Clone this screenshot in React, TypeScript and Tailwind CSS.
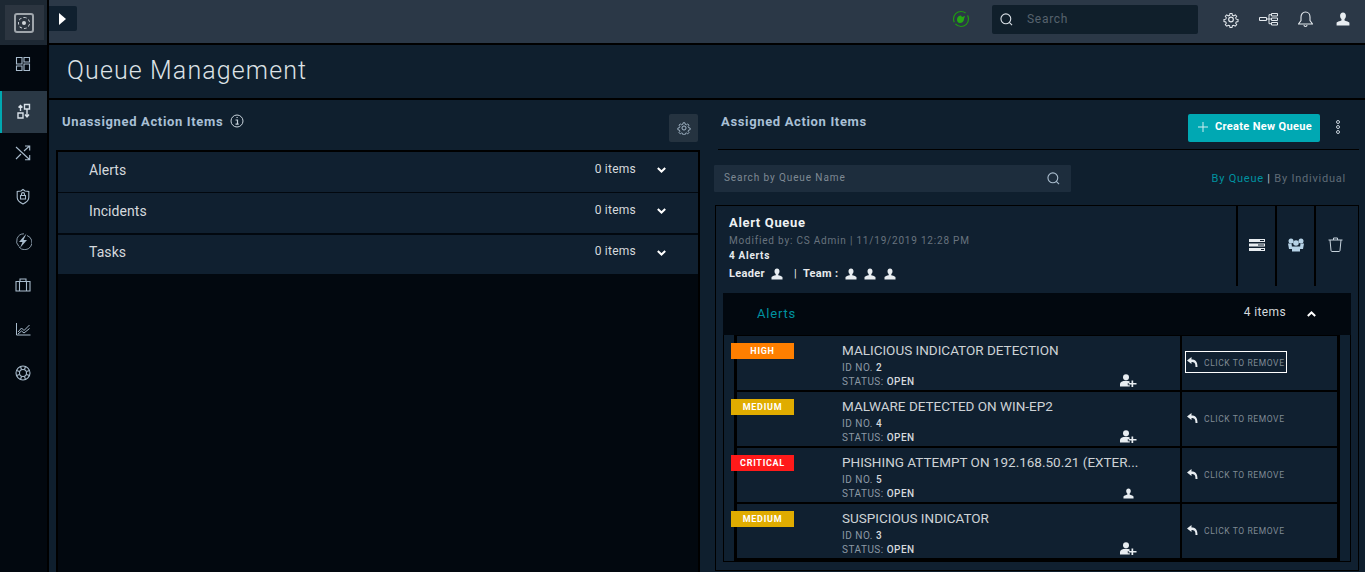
import { ReactNode } from "react";

const font = { fontFamily: "Roboto, 'Noto Sans', sans-serif" };

interface AlertRow {
  severity: string;
  badge: string;
  title: string;
  id: number;
  solo?: boolean;
  focused?: boolean;
}

const rows: AlertRow[] = [
  { severity: "HIGH", badge: "bg-[#ff7f00]", title: "MALICIOUS INDICATOR DETECTION", id: 2, focused: true },
  { severity: "MEDIUM", badge: "bg-[#e0ac00]", title: "MALWARE DETECTED ON WIN-EP2", id: 4 },
  { severity: "CRITICAL", badge: "bg-[#ff1a1a]", title: "PHISHING ATTEMPT ON 192.168.50.21 (EXTER...", id: 5, solo: true },
  { severity: "MEDIUM", badge: "bg-[#e0ac00]", title: "SUSPICIOUS INDICATOR", id: 3 },
];

function Icon({ size = 18, className = "", children }: { size?: number; className?: string; children: ReactNode }) {
  return (
    <svg
      width={size}
      height={size}
      viewBox="0 0 18 18"
      fill="none"
      stroke="currentColor"
      strokeWidth="1.1"
      className={className}
    >
      {children}
    </svg>
  );
}

function Person({ size = 12, className = "text-[#e8edf1]" }: { size?: number; className?: string }) {
  return (
    <svg width={size} height={size} viewBox="0 0 12 12" fill="currentColor" className={className}>
      <path d="M6 0.500c1.600 0 2.500 1.200 2.500 2.800 0 1.200-.5 2.200-1.200 2.800v1c0 .5 3.700 1 4.200 2.200v2.200H.5V9.300c.5-1.200 4.200-1.700 4.200-2.200v-1C4 5.500 3.500 4.500 3.500 3.300 3.500 1.700 4.400.5 6 .5z" />
    </svg>
  );
}

function PersonPlus() {
  return (
    <svg width="17" height="13" viewBox="0 0 17 13" fill="#e8edf1">
      <circle cx="6" cy="3.200" r="3" />
      <path d="M0 12.500V10c0-2 2-3.300 6-3.300 1.500 0 2.700.2 3.600.6v1.700H7.800v2.200h2v1.300z" />
      <path d="M11.500 6.500h1.700v2.400h3.300v1.500h-3.300v2.600h-1.700v-2.600H8.600V8.900h2.900z" />
    </svg>
  );
}

function Gear({ size = 16 }: { size?: number }) {
  return (
    <svg width={size} height={size} viewBox="0 0 24 24" fill="none" stroke="currentColor" strokeWidth="1.700">
      <circle cx="12" cy="12" r="3.500" />
      <path d="M10.300 2h3.400l.6 3 2.200.9 2.600-1.700 2.400 2.400-1.700 2.600.9 2.200 3 .6v3.400l-3 .6-.9 2.200 1.700 2.600-2.400 2.400-2.600-1.700-2.200.9-.6 3h-3.400l-.6-3-2.200-.9-2.600 1.700-2.400-2.400 1.700-2.600-.9-2.200-3-.6v-3.400l3-.6.9-2.200-1.700-2.600 2.400-2.400 2.600 1.700 2.200-.9z" transform="translate(1.200 1.200) scale(.9)" />
    </svg>
  );
}

function Chevron({ up = false }: { up?: boolean }) {
  return (
    <svg width="9" height="6" viewBox="0 0 9 6" fill="none" stroke="#fff" strokeWidth="2" className={up ? "rotate-180" : ""}>
      <path d="M.8 1l3.700 3.500L8.200 1" />
    </svg>
  );
}

function Magnifier({ size = 14, className = "" }: { size?: number; className?: string }) {
  return (
    <svg width={size} height={size} viewBox="0 0 14 14" fill="none" stroke="currentColor" strokeWidth="1.200" className={className}>
      <circle cx="6.300" cy="6.300" r="5.300" />
      <path d="M10 10l3 3" />
    </svg>
  );
}

function Sidebar() {
  return (
    <aside className="w-[49px] shrink-0 bg-[#02080f] border-r-2 border-[#000] flex flex-col text-[#a9bccd]">
      <div className="h-[45px] shrink-0 pl-[5px] pt-[5px] bg-[#1d2833]">
        <div className="w-[39px] h-[35px] bg-[#2c3540] flex items-center justify-center pr-[2px]">
          <div className="w-[20px] h-[20px] rounded-[3px] border-2 border-[#a0a6ac] flex items-center justify-center">
            <div className="w-[12px] h-[12px] rounded-full border border-dashed border-[#d0d5da] flex items-center justify-center">
              <div className="w-[4px] h-[4px] rounded-full bg-[#d0d5da]" />
            </div>
          </div>
        </div>
      </div>
      <div className="h-[38px] mb-[8px] flex items-center justify-center pr-[1px]">
        <Icon>
          <path d="M2.500 2.500h5.500v6.500H2.500zM10 2.500h5.500v4.500H10zM2.500 11h5.500v4.500H2.500zM10 9h5.500v6.500H10z" />
        </Icon>
      </div>
      <div className="h-[42px] flex items-center justify-center bg-[#2a3845] border-l-2 border-[#00a8b0] pr-[2px]">
        <Icon className="text-[#d7e0e8]">
          <path d="M5.500 8V2.500M3.500 4.500l2-2 2 2M9.500 1.500h5v4.500h-5zM12 6v7.500M10 11.500l2 2.500 2-2.500M3 10h5v5H3z" strokeWidth="1.400" />
        </Icon>
      </div>
      <div className="h-[42px] pb-[2px] flex items-center justify-center pr-[1px]">
        <Icon>
          <path d="M2 3l13.500 12.500M2 15l5-5M10 7l5.500-5M11 2h4.700v4.500M15.700 11v4.700H11" />
        </Icon>
      </div>
      <div className="h-[44px] flex items-center justify-center pr-[1px]">
        <Icon>
          <path d="M9 1.500l2 1.500 3.800.5v6c0 3-2.800 5-5.800 6.500-3-1.500-5.800-3.500-5.800-6.500v-6L7 3z" />
          <path d="M6.500 7.500h5v3.500h-5zM7.500 7.500V6c0-1.800 3-1.800 3 0v1.500" />
        </Icon>
      </div>
      <div className="h-[44px] flex items-center justify-center pr-[1px]">
        <Icon>
          <path d="M13 3.500A7.300 7.300 0 1 1 5 15M5 14.500A7.300 7.300 0 0 1 10 1.800" strokeWidth="0.800" />
          <path d="M12.500 1.500L5 10h3.500L6 16l7-8H9.500z" fill="currentColor" stroke="none" />
        </Icon>
      </div>
      <div className="h-[44px] flex items-center justify-center pr-[1px]">
        <Icon>
          <path d="M2 5.500h14v9.500H2zM6 5.500V3h6v2.500M5.500 5.500V15M12.500 5.500V15" />
        </Icon>
      </div>
      <div className="h-[44px] flex items-center justify-center pr-[1px]">
        <Icon>
          <path d="M2.500 3v12h14M4 12l3.500-4 2.500 2.500L15.500 5M4 14l3.500-3 2.500 2 5.500-4.500" strokeWidth="1" />
        </Icon>
      </div>
      <div className="h-[44px] flex items-center justify-center pr-[1px]">
        <Icon>
          <circle cx="9" cy="9" r="7" />
          <circle cx="9" cy="9" r="3.500" />
          <path d="M6.500 2.500l1 3M11.500 2.500l-1 3M15.500 6.500l-3 1M15.500 11.500l-3-1M11.500 15.500l-1-3M6.500 15.500l1-3M2.500 11.500l3-1M2.500 6.500l3 1" />
        </Icon>
      </div>
    </aside>
  );
}

function TopBar() {
  return (
    <header className="h-[45px] shrink-0 bg-[#2b3847] border-b-2 border-[#000] flex items-start text-[#e4e9ee]">
      <button className="w-[28px] h-[25px] mt-[6px] bg-[#10202f] rounded-r-[2px] flex items-center justify-center pr-[2px]">
        <span className="w-0 h-0 border-y-[6px] border-y-transparent border-l-[7px] border-l-white" />
      </button>
      <div className="ml-auto flex items-center h-[42px] pb-[4px]">
        <svg width="18" height="18" viewBox="0 0 18 18" fill="none">
          <circle cx="9" cy="9" r="7.500" stroke="#1f9a12" strokeWidth="1.200" strokeDasharray="18 2 20 3" />
          <path d="M5 9.500c0-2.500 2-4 4-4l1 1.500 3-1-1 3c0 2.500-2 4-4 4S5 11.500 5 9.500z" fill="#25a814" />
        </svg>
        <div className="ml-[22px] w-[206px] h-[29px] rounded-[2px] bg-[#101f2b] flex items-center pl-[8px]">
          <Magnifier size={13} className="text-[#d8dfe5]" />
          <span className="ml-[14px] text-[12px] tracking-[.06em] text-[#56626d]">Search</span>
        </div>
        <div className="ml-[25px] w-[16px] flex justify-center"><Gear size={17} /></div>
        <svg width="19" height="13" viewBox="0 0 19 13" fill="none" stroke="currentColor" className="ml-[20px]">
          <path d="M.5 4.500h7v3h-7zM12.500.5h6v2.500h-6zM12.500 5h6v2.500h-6zM12.500 9.500h6V12h-6zM7.500 6h5M10 1.700v9h2.500M10 1.700h2.500" />
        </svg>
        <svg width="15" height="17" viewBox="0 0 15 17" fill="none" stroke="currentColor" strokeWidth="1.100" className="ml-[20px]">
          <path d="M7.500 1c3 0 4.500 2.500 4.500 5v3.500l2.500 3.500H.5L3 9.500V6c0-2.500 1.500-5 4.500-5zM6 14c0 2 3 2 3 0" />
        </svg>
        <div className="ml-[23px] mr-[15px]"><Person size={14} /></div>
      </div>
    </header>
  );
}

function UnassignedRow({ label, className }: { label: string; className: string }) {
  return (
    <div className={`bg-[#102030] flex items-center pl-[31px] pr-[32px] pb-[4px] text-[#d5d9dd] ${className}`}>
      <span className="text-[14px] tracking-[.005em]">{label}</span>
      <span className="ml-auto -mt-[3px] text-[12px] tracking-[.02em]">0 items</span>
      <span className="ml-[21px] flex"><Chevron /></span>
    </div>
  );
}

function UnassignedPanel() {
  return (
    <section className="w-[651px] shrink-0 flex flex-col pl-[7px]">
      <div className="h-[50px] shrink-0 flex pt-[14px] pr-[2px]">
        <div className="pl-[6px] -mt-[2px] flex items-start">
          <span className="text-[13px] font-bold tracking-[.05em] text-[#a9c0d6]">Unassigned Action Items</span>
          <svg width="14" height="14" viewBox="0 0 14 14" fill="none" stroke="#c8d2db" className="ml-[7px] mt-[2px]">
            <circle cx="7" cy="7" r="6" />
            <path d="M5.500 6h2v4M5.500 10.200h3.200M6.500 3.500h1.200" strokeWidth="1.200" />
          </svg>
        </div>
        <div className="ml-auto w-[29px] h-[28px] rounded-[2px] bg-[#253340] flex items-center justify-center text-[#a9bccd]">
          <Gear size={14} />
        </div>
      </div>
      <div className="flex-1 bg-[#02080f] border-t-2 border-x-2 border-[#000]">
        <UnassignedRow label="Alerts" className="h-[40px] mb-px" />
        <UnassignedRow label="Incidents" className="h-[40px] mb-[2px]" />
        <UnassignedRow label="Tasks" className="h-[39px]" />
      </div>
    </section>
  );
}

function QueueRow({ row }: { row: AlertRow }) {
  return (
    <div className="h-[54px] flex bg-[#102030]">
      <div className="w-[445px] shrink-0 flex border-r-2 border-[#000]">
        <div className={`-ml-[6px] mt-[7px] w-[63px] h-[16px] pt-[1px] shrink-0 flex items-center justify-center text-[9px] font-bold tracking-[.08em] text-white ${row.badge}`}>
          {row.severity}
        </div>
        <div className="ml-[48px] flex-1 min-w-0 pt-[6px] flex flex-col">
          <div className="text-[13.500px] leading-[17px] text-[#cdd2d6] whitespace-nowrap">{row.title}</div>
          <div className="mt-[2px] flex items-end pr-[43px]">
            <div>
              <div className="text-[10px] leading-[14px] tracking-[.05em] text-[#8d99a5]">
                ID NO. <span className="text-[#d5d9dd] font-medium">{row.id}</span>
              </div>
              <div className="text-[10px] leading-[14px] tracking-[.05em] text-[#8d99a5]">
                STATUS: <span className="text-[#d5d9dd] font-medium">OPEN</span>
              </div>
            </div>
            <div className="ml-auto flex mb-[2px]">
              {row.solo ? <span className="mr-[3px]"><Person size={11} /></span> : <PersonPlus />}
            </div>
          </div>
        </div>
      </div>
      <div className="flex-1 pl-[3px] pt-[15px]">
        <div className={`w-[102px] h-[22px] flex items-center pl-[1px] border ${row.focused ? "border-white" : "border-transparent"}`}>
          <svg width="11" height="10" viewBox="0 0 11 10" fill="#e8edf1">
            <path d="M4.500 0L0 3.500 4.500 7V5C7 5 8.500 5.500 8.500 10h2C10.500 4 8 2.500 4.500 2.500z" />
          </svg>
          <span className="ml-[6px] pt-[2px] text-[8.500px] tracking-[.07em] text-[#7f8a94] whitespace-nowrap">CLICK TO REMOVE</span>
        </div>
      </div>
    </div>
  );
}

function AssignedPanel() {
  return (
    <section className="flex-1 min-w-0 flex flex-col pl-[14px] pr-[6px]">
      <div className="h-[50px] shrink-0 flex border-b border-[#000] pt-[14px] ml-[4px]">
        <span className="text-[13px] font-bold tracking-[.05em] text-[#a9c0d6] pl-[3px] -mt-[2px]">Assigned Action Items</span>
        <button className="ml-auto w-[132px] h-[28px] rounded-[2px] bg-[#00a8b3] flex items-center pl-[10px] pb-[2px] text-white">
          <svg width="10" height="10" viewBox="0 0 10 10" stroke="#cfeef0" className="mr-[7px]"><path d="M5 0v10M0 5h10" /></svg>
          <span className="text-[11px] font-bold tracking-[.03em] whitespace-nowrap">Create New Queue</span>
        </button>
        <div className="w-[39px] pr-[3px] pt-[6px] flex flex-col items-center gap-[1px]">
          <span className="w-[4px] h-[4px] rounded-full border border-[#c8d2db]" />
          <span className="w-[4px] h-[4px] rounded-full border border-[#c8d2db]" />
          <span className="w-[4px] h-[4px] rounded-full border border-[#c8d2db]" />
        </div>
      </div>
      <div className="h-[55px] shrink-0 pt-[15px] flex">
        <div className="w-[357px] h-[27px] rounded-[1px] bg-[#1d2d3d] flex items-center pl-[10px] pr-[11px] justify-between">
          <span className="text-[10px] tracking-[.09em] text-[#7f8a94] -mt-[2px]">Search by Queue Name</span>
          <Magnifier size={13} className="text-[#a9bccd]" />
        </div>
        <div className="ml-auto pr-[13px] pt-[7px] text-[11px] leading-[14px] tracking-[.07em] text-[#5f6b76]">
          <span className="text-[#0092a0]">By Queue</span>
          <span className="text-[#b8c0c8]"> | </span>
          By Individual
        </div>
      </div>
      <div className="flex-1 ml-[1px] mb-[1px] border border-[#000] bg-[#102030] min-h-0">
        <div className="h-[87px] flex pl-[13px]">
          <div className="flex-1 pt-[8px]">
            <div className="text-[13px] leading-[17px] font-bold tracking-[.05em] text-[#eef1f3]">Alert Queue</div>
            <div className="mt-[3px] text-[10px] leading-[14px] tracking-[.08em] text-[#68737e]">Modified by: CS Admin | 11/19/2019 12:28 PM</div>
            <div className="mt-[1px] text-[10px] leading-[14px] font-bold tracking-[.07em] text-[#e8ebee]">4 Alerts</div>
            <div className="mt-[4px] flex items-center text-[11px] leading-[14px] font-bold tracking-[.03em] text-[#e8ebee]">
              Leader
              <span className="ml-[6px]"><Person size={12} /></span>
              <span className="ml-[11px] font-normal">|</span>
              <span className="ml-[6px]">Team :</span>
              <span className="ml-[7px]"><Person size={12} /></span>
              <span className="ml-[7px]"><Person size={12} /></span>
              <span className="ml-[8px]"><Person size={12} /></span>
            </div>
          </div>
          <div className="h-[80px] flex">
            <div className="w-[39px] border-l-2 border-[#000] flex items-center justify-center pb-[3px]">
              <svg width="16" height="12" viewBox="0 0 16 12" fill="#e8edf1">
                <path d="M0 0h16v3H0zM0 4.500h16v3H0zM0 9h16v3H0z" />
                <path d="M11 1h4v1h-4zM9 5.500h6v1H9zM12 10h3v1h-3z" fill="#102030" />
              </svg>
            </div>
            <div className="w-[39px] border-l-2 border-[#000] flex items-center justify-center pb-[3px]">
              <svg width="16" height="14" viewBox="0 0 16 14" fill="#b6d2e6">
                <circle cx="3" cy="3" r="2.500" />
                <circle cx="13" cy="3" r="2.500" />
                <circle cx="8" cy="5" r="2.800" />
                <path d="M0 5.500h3.500L4 9v2H1zM16 5.500h-3.500L12 9v2h3zM4 8.500h8v5H4z" />
              </svg>
            </div>
            <div className="w-[44px] border-l-2 border-[#000] flex items-center justify-center text-[#c6d2dc] pb-[3px] pr-[4px]">
              <svg width="15" height="15" viewBox="0 0 15 15" fill="none" stroke="currentColor">
                <path d="M.5 3h14M5.500 3V1h4v2M2 3l1 10.500c0 .6.500 1 1 1h7c.5 0 1-.4 1-1L13 3" />
              </svg>
            </div>
          </div>
        </div>
        <div className="ml-[7px] mr-[7px]">
          <div className="h-[42px] bg-[#02080f] flex items-center pl-[34px] pr-[35px]">
            <span className="text-[13px] tracking-[.06em] text-[#0092a0]">Alerts</span>
            <span className="ml-auto -mt-[5px] text-[12px] tracking-[.03em] text-[#d5d9dd]">4 items</span>
            <span className="ml-[21px] flex"><Chevron up /></span>
          </div>
          <div className="flex border-x border-b border-[#000] h-[227px]">
            <div className="w-[10px] shrink-0 bg-[#0f2030]" />
            <div className="flex-1 min-w-0 border-x-[3px] border-[#000] bg-[#000] flex flex-col gap-[2px] pt-px pb-[3px]">
              {rows.map((row) => (
                <QueueRow key={row.id} row={row} />
              ))}
            </div>
            <div className="w-[10px] shrink-0 bg-[#0f2030]" />
          </div>
        </div>
      </div>
    </section>
  );
}

export default function App() {
  return (
    <div className="h-[572px] w-[1365px] overflow-hidden flex bg-[#0f1f2e]" style={font}>
      <Sidebar />
      <div className="flex-1 min-w-0 flex flex-col">
        <TopBar />
        <div className="h-[55px] shrink-0 border-b-2 border-[#000] pl-[18px] pt-[9px]">
          <h1 className="text-[25px] leading-[34px] font-light tracking-[.045em] text-[#dde2e6]">Queue Management</h1>
        </div>
        <main className="flex-1 min-h-0 flex">
          <UnassignedPanel />
          <AssignedPanel />
        </main>
      </div>
    </div>
  );
}
